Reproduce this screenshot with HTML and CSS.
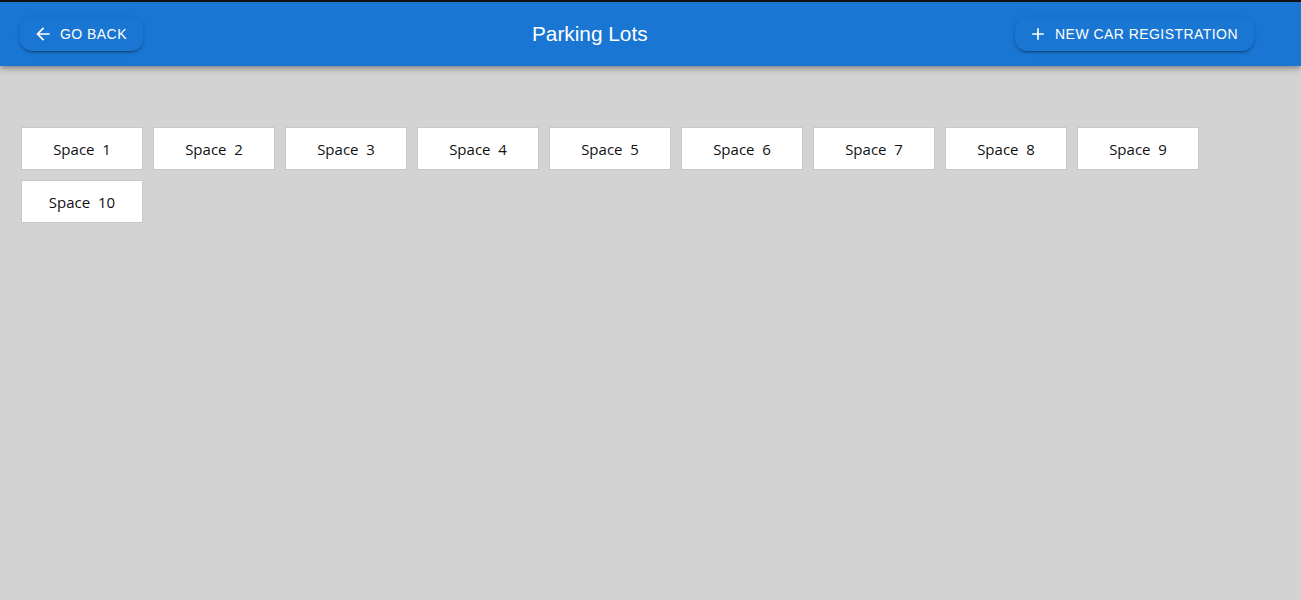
FILE: index.html
```html
<!DOCTYPE html>
<html>
<head>
<meta charset="utf-8">
<link rel="stylesheet" href="styles.css">
</head>
<body>
<header class="appbar">
  <button class="btn">
    <svg class="icon" viewBox="0 0 24 24" width="20" height="20"><path d="M20 11H7.83l5.59-5.59L12 4l-8 8 8 8 1.41-1.41L7.83 13H20v-2z" fill="currentColor"/></svg>
    <span>Go back</span>
  </button>
  <h1 class="title">Parking Lots</h1>
  <button class="btn">
    <svg class="icon" viewBox="0 0 24 24" width="20" height="20"><path d="M19 13h-6v6h-2v-6H5v-2h6V5h2v6h6v2z" fill="currentColor"/></svg>
    <span>New car registration</span>
  </button>
</header>
<main class="lot">
  <div class="space">Space&nbsp; 1</div>
  <div class="space">Space&nbsp; 2</div>
  <div class="space">Space&nbsp; 3</div>
  <div class="space">Space&nbsp; 4</div>
  <div class="space">Space&nbsp; 5</div>
  <div class="space">Space&nbsp; 6</div>
  <div class="space">Space&nbsp; 7</div>
  <div class="space">Space&nbsp; 8</div>
  <div class="space">Space&nbsp; 9</div>
  <div class="space">Space&nbsp; 10</div>
</main>
</body>
</html>
```
FILE: styles.css
```css
html, body {
  margin: 0;
  padding: 0;
  background: #d3d3d3;
  height: 100%;
}
.appbar {
  box-sizing: border-box;
  height: 66px;
  border-top: 2px solid #111;
  background: #1976d2;
  display: flex;
  align-items: center;
  padding: 0 47px 0 20px;
  box-shadow: 0 2px 4px -1px rgba(0,0,0,0.2), 0 4px 5px 0 rgba(0,0,0,0.14), 0 1px 10px 0 rgba(0,0,0,0.12);
  position: relative;
}
.btn {
  display: inline-flex;
  align-items: center;
  gap: 7px;
  height: 34px;
  padding: 0 16px 0 13px;
  border: none;
  border-radius: 12px;
  background: #1976d2;
  color: #fff;
  font-family: "Liberation Sans", Arial, sans-serif;
  font-size: 14px;
  font-weight: 500;
  letter-spacing: 0.45px;
  text-transform: uppercase;
  box-shadow: 0 3px 1px -2px rgba(0,0,0,0.2), 0 2px 2px 0 rgba(0,0,0,0.14), 0 1px 5px 0 rgba(0,0,0,0.12);
  margin-top: -1px;
}
.icon { flex: none; }
.title {
  margin: 0 0 0 389px;
  flex: 1;
  color: #fff;
  font-family: "Liberation Sans", Arial, sans-serif;
  font-size: 20.8px;
  font-weight: 400;
}
.lot {
  display: flex;
  flex-wrap: wrap;
  gap: 10px;
  padding: 61px 21px 0 21px;
  max-width: 1190px;
}
.space {
  box-sizing: border-box;
  width: 122px;
  height: 43px;
  background: #fff;
  border: 1px solid #c8c8c8;
  display: flex;
  align-items: center;
  justify-content: center;
  font-family: "Open Sans", "Noto Sans", sans-serif;
  font-size: 15px;
  color: #111;
}
```
